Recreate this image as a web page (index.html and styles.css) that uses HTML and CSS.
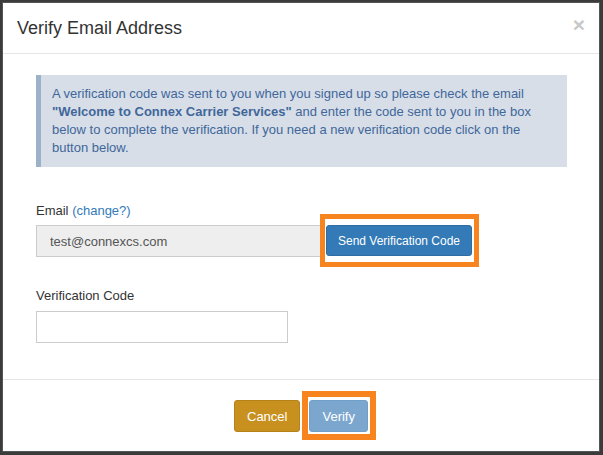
FILE: index.html
```html
<!DOCTYPE html>
<html lang="en">
<head>
<meta charset="utf-8">
<title>Verify Email Address</title>
<link rel="stylesheet" href="styles.css">
</head>
<body>
<div class="modal">
  <div class="modal-header">
    <h4 class="modal-title">Verify Email Address</h4>
    <span class="close">&times;</span>
  </div>
  <div class="modal-body">
    <div class="alert">A verification code was sent to you when you signed up so please check the email <strong>"Welcome to Connex Carrier Services"</strong> and enter the code sent to you in the box below to complete the verification. If you need a new verification code click on the button below.</div>
    <div class="group email-group">
      <label class="label">Email <a class="link">(change?)</a></label>
      <div class="input-row">
        <input class="input input-email" type="text" value="test@connexcs.com" readonly>
        <span class="mark mark-send"><button class="btn btn-send" type="button">Send Verification Code</button></span>
      </div>
    </div>
    <div class="group code-group">
      <label class="label">Verification Code</label>
      <input class="input input-code" type="text">
    </div>
  </div>
  <div class="modal-footer">
    <button class="btn btn-cancel" type="button">Cancel</button>
    <span class="mark mark-verify"><button class="btn btn-verify" type="button">Verify</button></span>
  </div>
</div>
</body>
</html>
```
FILE: styles.css
```css
* { box-sizing: border-box; }
html, body { margin: 0; padding: 0; }
body {
  background: #3b3b3b;
  font-family: "Liberation Sans", Arial, sans-serif;
  color: #333;
  width: 603px;
  height: 455px;
  overflow: hidden;
  padding: 2px 0 0 2px;
}
.modal {
  width: 598px;
  height: 450px;
  background: #fff;
  border: 1px solid #555;
  display: flex;
  flex-direction: column;
}
.modal-header {
  display: flex;
  justify-content: space-between;
  align-items: center;
  padding: 15px 14px 15px 14px;
  border-bottom: 1px solid #e5e5e5;
}
.modal-title {
  margin: 0;
  font-size: 18px;
  line-height: 20px;
  font-weight: normal;
  color: #333;
}
.close {
  font-size: 21px;
  font-weight: bold;
  line-height: 20px;
  color: #c8c8c8;
  margin-top: -6px;
}
.modal-body {
  padding: 21px 32px 35px 33px;
  flex: 1;
}
.alert {
  background: #d7dee8;
  border-left: 5px solid #9bb2c8;
  color: #41679a;
  font-size: 13px;
  line-height: 18px;
  padding: 10px 15px 10px 11px;
}
.alert strong { font-weight: bold; }
.group { display: flex; flex-direction: column; align-items: flex-start; }
.email-group { margin-top: 35px; }
.code-group { margin-top: 30px; }
.label {
  font-size: 13px;
  line-height: 18px;
  color: #333;
  margin-bottom: 5px;
}
.code-group .label { margin-bottom: 6px; }
.link { color: #337ab7; }
.input-row { display: flex; align-items: flex-start; }
.input {
  height: 32px;
  border: 1px solid #ccc;
  border-radius: 0;
  font-family: "Liberation Sans", Arial, sans-serif;
  font-size: 13px;
  color: #555;
  padding: 6px 13px;
  margin: 0;
  outline: none;
}
.input-email { width: 286px; background: #eee; }
.input-code { width: 252px; background: #fff; }
.btn {
  font-family: "Liberation Sans", Arial, sans-serif;
  color: #fff;
  border-radius: 3px;
  margin: 0;
  cursor: pointer;
}
.btn-send {
  width: 146px;
  height: 31px;
  font-size: 12px;
  padding: 0;
  background: #337ab7;
  border: 1px solid #2e6da4;
}
.mark { position: relative; display: inline-flex; }
.mark::after {
  content: "";
  position: absolute;
  pointer-events: none;
  border: 5px solid #f7841f;
}
.mark-send { margin-left: 4px; }
.mark-send::after { left: -6px; top: -11px; right: -7px; bottom: -11px; }
.modal-footer {
  border-top: 1px solid #e5e5e5;
  padding: 20px 0 19px;
  display: flex;
  justify-content: center;
  align-items: flex-start;
}
.btn-cancel, .btn-verify {
  height: 32px;
  font-size: 13px;
  padding: 0 12px;
}
.btn-cancel { background: #c8901f; border: 1px solid #b8821a; }
.btn-verify { background: #7ba7cf; border: 1px solid #70a0ca; }
.mark-verify { margin-left: 9px; }
.mark-verify::after { border-width: 6px; left: -7px; top: -9px; right: -8px; bottom: -8px; }
```
